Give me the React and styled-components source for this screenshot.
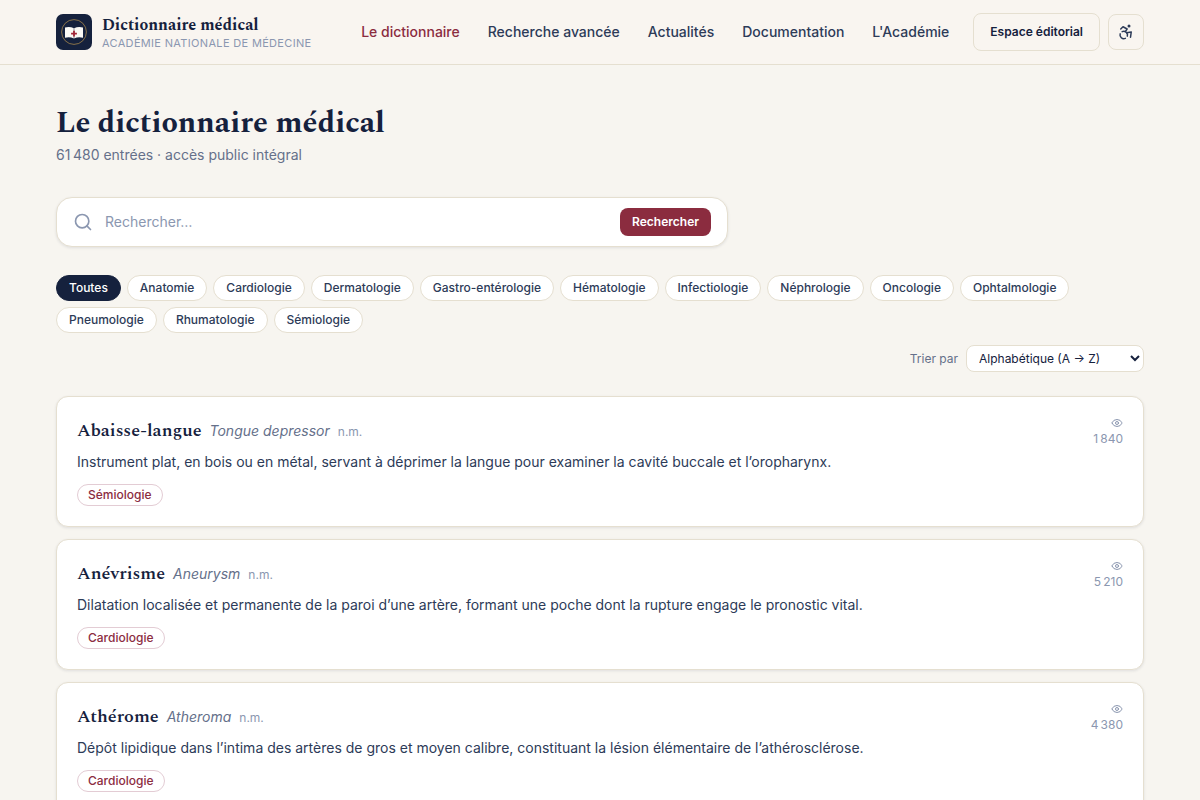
import { useState } from "react"
import styled, { createGlobalStyle } from "styled-components"
import { Accessibility, Eye, Search } from "lucide-react"

const GlobalStyle = createGlobalStyle`
  :root {
    --navy: #15213d;
    --slate: #2d3b58;
    --grey: #65708a;
    --mist: #8b97b0;
    --red: #8b2c3f;
    --line: #e5dfd0;
    --paper: #f7f5f0;
    --serif: Spectral, "Liberation Serif", serif;
  }

  * {
    box-sizing: border-box;
  }

  body {
    margin: 0;
    background: var(--paper);
    color: var(--navy);
    font-family: Inter, sans-serif;
    font-size: 14px;
    line-height: 20px;
  }

  button,
  input,
  select {
    font-family: inherit;
  }
`

const Header = styled.header`
  background: #f9f5f0;
  border-bottom: 1px solid var(--line);
`

const HeaderInner = styled.div`
  display: flex;
  align-items: center;
  justify-content: space-between;
  max-width: 1200px;
  height: 64px;
  margin: 0 auto;
  padding: 0 56px;
`

const Brand = styled.a`
  display: flex;
  align-items: center;
  gap: 10px;
  color: var(--navy);
  text-decoration: none;
  white-space: nowrap;
`

const BrandName = styled.span`
  display: block;
  font-family: var(--serif);
  font-size: 16px;
  font-weight: 700;
  line-height: 22px;
`

const BrandOwner = styled.span`
  display: block;
  color: var(--mist);
  font-size: 11px;
  letter-spacing: 0.03em;
  line-height: 14px;
  text-transform: uppercase;
`

const HeaderEnd = styled.div`
  display: flex;
  align-items: center;
  gap: 24px;
`

const Nav = styled.nav`
  display: flex;
  gap: 28px;
`

const NavLink = styled.a`
  color: ${({ $active }) => ($active ? "var(--red)" : "var(--slate)")};
  font-weight: 500;
  text-decoration: none;
  white-space: nowrap;
`

const Actions = styled.div`
  display: flex;
  align-items: center;
  gap: 8px;
`

const EditorLink = styled.a`
  padding: 8px 16px;
  border: 1px solid var(--line);
  border-radius: 8px;
  color: var(--navy);
  font-size: 12px;
  font-weight: 600;
  text-decoration: none;
  white-space: nowrap;
`

const IconButton = styled.button`
  display: flex;
  align-items: center;
  justify-content: center;
  width: 36px;
  height: 36px;
  padding: 0;
  border: 1px solid var(--line);
  border-radius: 8px;
  background: transparent;
  color: var(--slate);
  cursor: pointer;
`

const Main = styled.main`
  max-width: 1200px;
  margin: 0 auto;
  padding: 40px 56px;
`

const Title = styled.h1`
  margin: 0;
  font-family: var(--serif);
  font-size: 30px;
  font-weight: 700;
  line-height: 36px;
`

const Subtitle = styled.p`
  margin: 4px 0 32px;
  color: var(--grey);
`

const SearchBar = styled.form`
  display: flex;
  align-items: center;
  gap: 12px;
  max-width: 672px;
  height: 50px;
  padding: 0 16px;
  border: 1px solid var(--line);
  border-radius: 16px;
  background: #fff;
  box-shadow: 0 1px 3px rgba(21, 33, 61, 0.1);
  color: var(--mist);
`

const SearchInput = styled.input`
  flex: 1;
  min-width: 0;
  height: 20px;
  padding: 0;
  border: 0;
  outline: 0;
  background: transparent;
  color: var(--navy);
  font-size: 14px;
  line-height: 20px;

  &::placeholder {
    color: var(--mist);
  }
`

const SearchButton = styled.button`
  padding: 6px 12px;
  border: 0;
  border-radius: 8px;
  background: var(--red);
  color: #fff;
  font-size: 12px;
  font-weight: 600;
  line-height: 16px;
  cursor: pointer;
`

const Filters = styled.div`
  display: flex;
  flex-wrap: wrap;
  gap: 6px;
  margin-top: 28px;
`

const Chip = styled.button`
  padding: 4px 12px;
  border: 1px solid ${({ $active }) => ($active ? "var(--navy)" : "var(--line)")};
  border-radius: 13px;
  background: ${({ $active }) => ($active ? "var(--navy)" : "#fff")};
  color: ${({ $active }) => ($active ? "#fff" : "var(--slate)")};
  font-size: 12px;
  font-weight: 500;
  line-height: 16px;
  cursor: pointer;
`

const SortRow = styled.div`
  display: flex;
  align-items: center;
  justify-content: flex-end;
  gap: 8px;
  margin: 12px 0 24px;
  color: var(--grey);
  font-size: 12px;
`

const SortSelect = styled.select`
  width: 178px;
  height: 27px;
  padding: 0 8px;
  border: 1px solid var(--line);
  border-radius: 8px;
  background: #fff;
  color: var(--navy);
  font-size: 12px;
`

const Entries = styled.div`
  display: flex;
  flex-direction: column;
  gap: 12px;
`

const Card = styled.article`
  display: flex;
  justify-content: space-between;
  gap: 16px;
  padding: 20px;
  border: 1px solid var(--line);
  border-radius: 12px;
  background: #fff;
  box-shadow: 0 1px 3px rgba(21, 33, 61, 0.1);
`

const Heading = styled.div`
  display: flex;
  flex-wrap: wrap;
  align-items: baseline;
  gap: 8px;
`

const Term = styled.h2`
  margin: 0;
  font-family: var(--serif);
  font-size: 18px;
  font-weight: 600;
  line-height: 28px;
`

const English = styled.em`
  color: var(--grey);
`

const Grammar = styled.span`
  color: var(--mist);
  font-size: 12px;
`

const Definition = styled.p`
  margin: 6px 0 11px;
  color: var(--slate);
  line-height: 22px;
`

const Tag = styled.span`
  display: inline-block;
  padding: 2px 10px;
  border: 1px solid #e3ccd4;
  border-radius: 11px;
  color: var(--red);
  font-size: 12px;
  font-weight: 500;
  line-height: 16px;
  vertical-align: top;
`

const Views = styled.div`
  display: flex;
  flex-direction: column;
  align-items: flex-end;
  color: var(--mist);
  font-size: 12px;
  line-height: 20px;
`

const navItems = [
  "Le dictionnaire",
  "Recherche avancée",
  "Actualités",
  "Documentation",
  "L'Académie",
]

const specialties = [
  "Toutes",
  "Anatomie",
  "Cardiologie",
  "Dermatologie",
  "Gastro-entérologie",
  "Hématologie",
  "Infectiologie",
  "Néphrologie",
  "Oncologie",
  "Ophtalmologie",
  "Pneumologie",
  "Rhumatologie",
  "Sémiologie",
]

const entries = [
  {
    term: "Abaisse-langue",
    english: "Tongue depressor",
    grammar: "n.m.",
    definition:
      "Instrument plat, en bois ou en métal, servant à déprimer la langue pour examiner la cavité buccale et l’oropharynx.",
    specialty: "Sémiologie",
    views: "1\u202f840",
  },
  {
    term: "Anévrisme",
    english: "Aneurysm",
    grammar: "n.m.",
    definition:
      "Dilatation localisée et permanente de la paroi d’une artère, formant une poche dont la rupture engage le pronostic vital.",
    specialty: "Cardiologie",
    views: "5\u202f210",
  },
  {
    term: "Athérome",
    english: "Atheroma",
    grammar: "n.m.",
    definition:
      "Dépôt lipidique dans l’intima des artères de gros et moyen calibre, constituant la lésion élémentaire de l’athérosclérose.",
    specialty: "Cardiologie",
    views: "4\u202f380",
  },
]

const Logo = () => (
  <svg width="36" height="36" viewBox="0 0 36 36" aria-hidden="true">
    <rect width="36" height="36" rx="7" fill="#15213d" />
    <circle cx="18" cy="18" r="12.4" fill="none" stroke="#a5854b" strokeWidth="0.8" />
    <path
      d="M9 13.5c3-.9 6-.7 9 .7 3-1.4 6-1.6 9-.7v10.3c-3-.9-6-.7-9 .7-3-1.4-6-1.6-9-.7z"
      fill="#fbf9f5"
    />
    <path d="M18 14.2v10.3" stroke="#15213d" strokeWidth="0.5" />
    <path d="M17.1 16.8h1.8v2h2v1.8h-2v2h-1.8v-2h-2v-1.8h2z" fill="#a32638" />
  </svg>
)

const Entry = ({ term, english, grammar, definition, specialty, views }) => (
  <Card>
    <div>
      <Heading>
        <Term>{term}</Term>
        <English lang="en">{english}</English>
        <Grammar>{grammar}</Grammar>
      </Heading>
      <Definition>{definition}</Definition>
      <Tag>{specialty}</Tag>
    </div>
    <Views>
      <Eye size={12} />
      <span>{views}</span>
    </Views>
  </Card>
)

const App = () => {
  const [specialty, setSpecialty] = useState("Toutes")

  return (
    <>
      <GlobalStyle />
      <Header>
        <HeaderInner>
          <Brand href="#">
            <Logo />
            <span>
              <BrandName>Dictionnaire médical</BrandName>
              <BrandOwner>Académie nationale de médecine</BrandOwner>
            </span>
          </Brand>
          <HeaderEnd>
            <Nav>
              {navItems.map((item, i) => (
                <NavLink key={item} href="#" $active={i === 0}>
                  {item}
                </NavLink>
              ))}
            </Nav>
            <Actions>
              <EditorLink href="#">Espace éditorial</EditorLink>
              <IconButton type="button" aria-label="Accessibilité">
                <Accessibility size={18} />
              </IconButton>
            </Actions>
          </HeaderEnd>
        </HeaderInner>
      </Header>
      <Main>
        <Title>Le dictionnaire médical</Title>
        <Subtitle>61{"\u202f"}480 entrées · accès public intégral</Subtitle>
        <SearchBar role="search" onSubmit={(e) => e.preventDefault()}>
          <Search size={20} />
          <SearchInput type="text" placeholder="Rechercher…" aria-label="Rechercher" />
          <SearchButton type="submit">Rechercher</SearchButton>
        </SearchBar>
        <Filters>
          {specialties.map((name) => (
            <Chip
              key={name}
              type="button"
              $active={name === specialty}
              onClick={() => setSpecialty(name)}
            >
              {name}
            </Chip>
          ))}
        </Filters>
        <SortRow>
          <label htmlFor="sort">Trier par</label>
          <SortSelect id="sort">
            <option>Alphabétique (A → Z)</option>
            <option>Alphabétique (Z → A)</option>
            <option>Les plus consultées</option>
          </SortSelect>
        </SortRow>
        <Entries>
          {entries.map((entry) => (
            <Entry key={entry.term} {...entry} />
          ))}
        </Entries>
      </Main>
    </>
  )
}

export default App
